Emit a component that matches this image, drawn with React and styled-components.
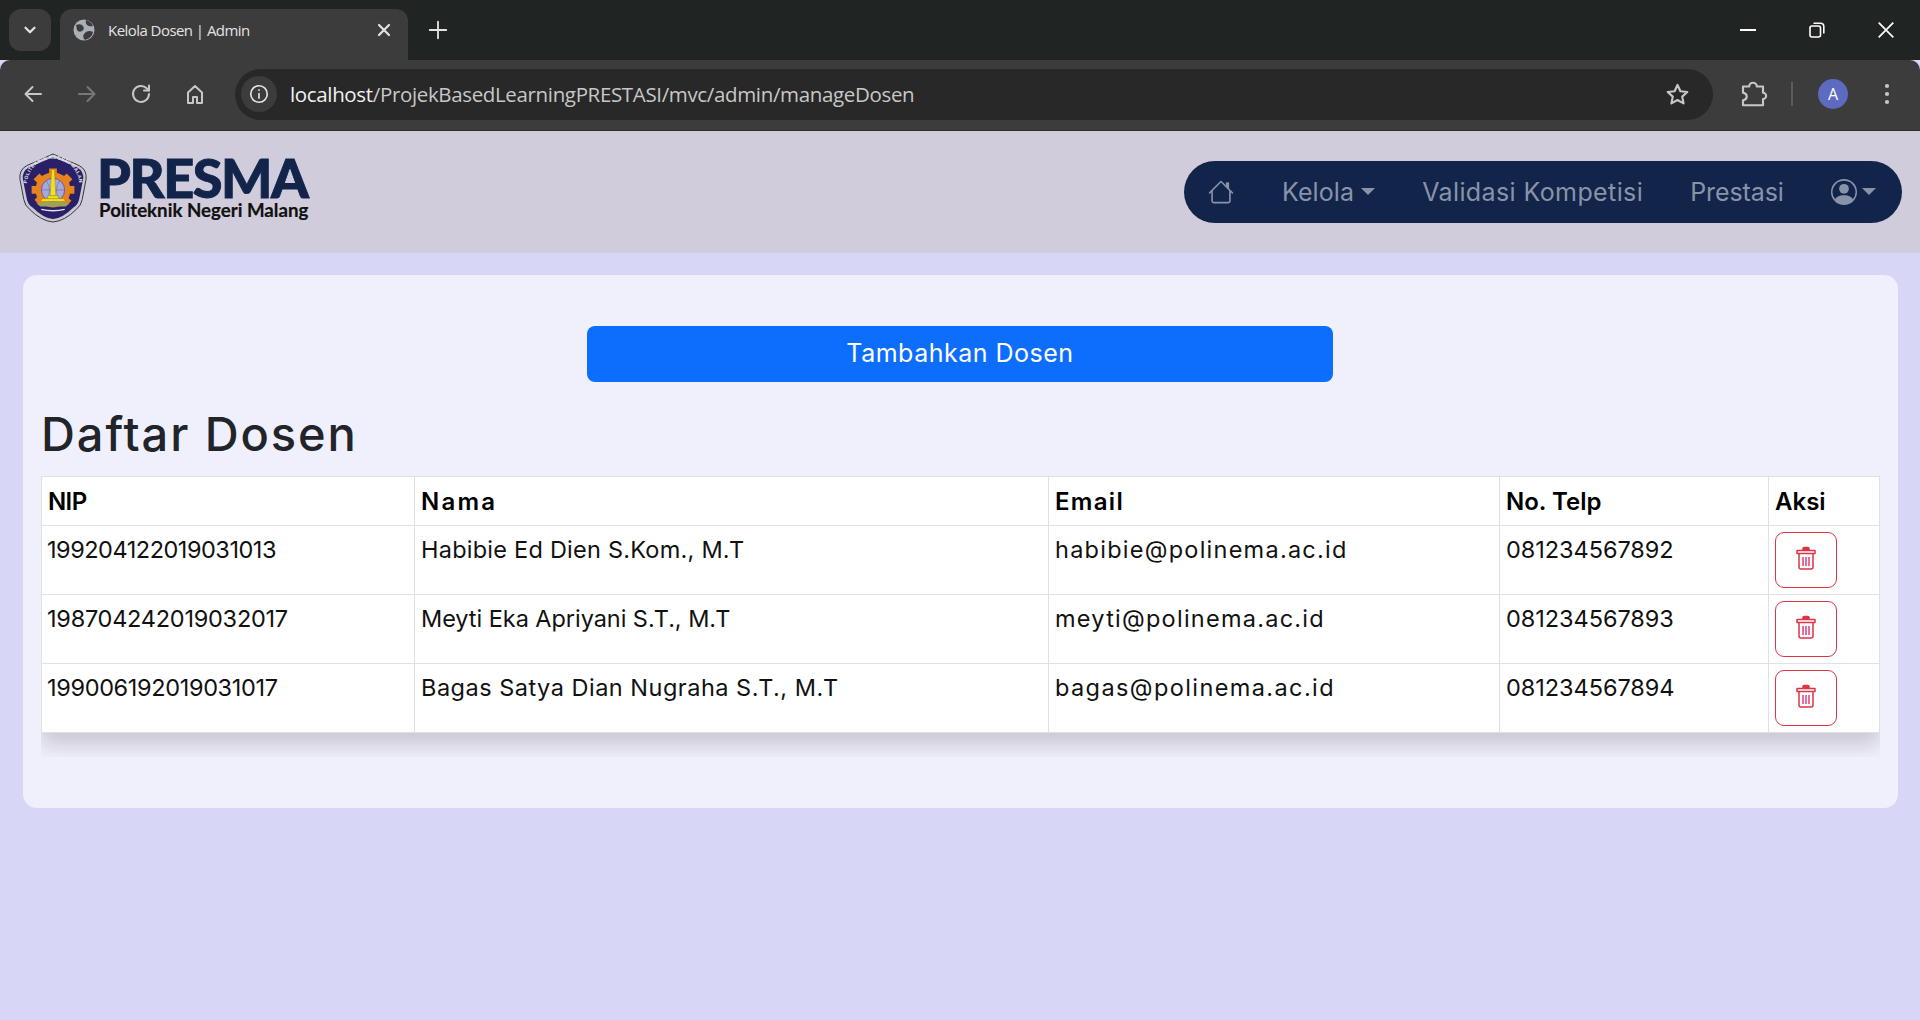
import React from "react";
import styled, { createGlobalStyle } from "styled-components";
import { BsHouse, BsPersonCircle } from "react-icons/bs";

const Global = createGlobalStyle`
  html, body { margin: 0; padding: 0; height: 100%; background: #d8d6f7; overflow: hidden; }
  #root { min-height: 100%; }
  * { box-sizing: border-box; }
`;

const Page = styled.div`
  width: 1920px; height: 1020px; display: flex; flex-direction: column; background: #d8d6f7;
  font-family: "Inter", "Liberation Sans", sans-serif;
`;
const TabStrip = styled.div`
  height: 60px; background: #202423; display: flex; align-items: flex-end; padding-left: 9px; flex: none;
`;
const TabSearch = styled.div`
  width: 42px; height: 42px; margin: 0 9px 9px 0; border-radius: 12px; background: #3c3c3c;
  display: flex; align-items: center; justify-content: center;
`;
const Tab = styled.div`
  width: 348px; height: 51px; background: #3c3c3c; border-radius: 12px 12px 0 0; display: flex; align-items: center;
  padding: 0 14px 9px 13px;
`;
const TabTitle = styled.span`
  flex: 1; margin-left: 13px; color: #e3e3e3; font: 400 15px "Open Sans", sans-serif; letter-spacing: -0.55px; white-space: nowrap;
`;
const NewTab = styled.div`
  width: 44px; height: 42px; margin: 0 0 9px 8px; display: flex; align-items: center; justify-content: center;
`;
const WindowControls = styled.div`
  margin-left: auto; display: flex; height: 60px; align-items: center;
`;
const WindowButton = styled.div`
  width: 69px; height: 60px; display: flex; align-items: center; justify-content: center;
`;
const Toolbar = styled.div`
  height: 71px; flex: none; background: #3c3c3c; display: flex; align-items: center; padding: 0 0 2px 6px;
  border-bottom: 1px solid #2c2c2c; border-radius: 10px 10px 0 0;
`;
const ToolButton = styled.div`
  width: 54px; height: 42px; display: flex; align-items: center; justify-content: center; flex: none;
`;
const Omnibox = styled.div`
  width: 1478px; height: 51px; margin-left: 13px; border-radius: 26px; background: #282828; display: flex; align-items: center; padding: 0 22px 0 6px; flex: none;
`;
const InfoChip = styled.div`
  width: 36px; height: 36px; border-radius: 50%; background: #3c3c3c; display: flex; align-items: center; justify-content: center; flex: none;
`;
const Url = styled.div`
  margin-left: 13px; flex: 1; font: 400 20.5px "Open Sans", sans-serif; letter-spacing: -0.35px; color: #c7c7c7; white-space: nowrap;
  b { font-weight: 400; color: #f1f1f1; }
`;
const ToolRight = styled.div`
  display: flex; align-items: center; flex: none; margin-left: 13px;
`;
const Divider = styled.div`
  width: 2px; height: 24px; background: #5c5c5c; margin: 0 25px 0 11px;
`;
const Avatar = styled.div`
  width: 30px; height: 30px; border-radius: 50%; background: #5c6bc0; color: #fff; font: 400 16px "Open Sans", sans-serif;
  display: flex; align-items: center; justify-content: center; margin-right: 27px;
`;
const NavBar = styled.nav`
  height: 122px; flex: none; background: #d0ccdb; display: flex; align-items: center; justify-content: space-between; padding: 0 18px 0 18px;
`;
const Brand = styled.div`
  display: flex; align-items: center; gap: 11px; margin-top: -9px;
`;
const BrandText = styled.div`
  display: flex; flex-direction: column;
`;
const BrandName = styled.div`
  font: 900 54px/46px "Lato", sans-serif; color: #12244a; letter-spacing: -1.4px; -webkit-text-stroke: 0.9px #12244a; white-space: nowrap; margin-left: -2px;
`;
const BrandSub = styled.div`
  font: 700 18.7px/19px "Lato", sans-serif; color: #111; white-space: nowrap; -webkit-text-stroke: 0.2px #111;
`;
const Pill = styled.div`
  width: 718px; height: 62px; background: #12244a; border-radius: 31px; display: flex; align-items: center; color: #8893a8;
  padding-left: 24px;
`;
const PillLink = styled.div`
  font: 400 25px "Inter", sans-serif; color: #8893a8; letter-spacing: ${p => p.$ls}px; margin-left: ${p => p.$ml}px; display: flex; align-items: center; white-space: nowrap;
`;
const Caret = styled.span`
  display: inline-block; width: 0; height: 0; margin-left: ${p => p.$ml}px; border-top: 7px solid currentColor; border-left: 7px solid transparent; border-right: 7px solid transparent; margin-top: -2px;
`;
const Main = styled.main`
  flex: 1; padding: 22px 22px 0 23px;
`;
const Card = styled.section`
  height: 533px; background: #f0effc; border-radius: 14px; padding: 51px 18px 0;
  display: flex; flex-direction: column;
`;
const AddButton = styled.button`
  width: 746px; height: 56px; margin-left: -1px; padding: 0 0 2px; align-self: center; background: #0d6efd; color: #fff; border: none; border-radius: 8px; flex: none;
  font: 400 25px "Inter", sans-serif; letter-spacing: 0.5px;
`;
const Heading = styled.h1`
  margin: 18px 0 2px 0; height: 74px; font: 500 47px/68px "Inter", sans-serif; color: #212529; letter-spacing: 1.9px;
`;
const TableWrap = styled.div`
  height: 281px; width: 1839px; overflow: hidden; flex: none;
`;
const Table = styled.table`
  width: 1838px; border-collapse: collapse; table-layout: fixed; background: #fff; box-shadow: 0 12px 20px rgba(0,0,0,.17);
`;
const Th = styled.th`
  border: 1px solid #dee2e6; height: 49px; padding: 0 6px; text-align: left; font: 600 24px "Inter", sans-serif; color: #000; letter-spacing: ${p => p.$ls}px;
`;
const Td = styled.td`
  border: 1px solid #dee2e6; height: 69px; padding: 10px 6px 0 ${p => p.$pl || 6}px; vertical-align: top; font: 400 23.5px/28px "Inter", sans-serif; color: #111;
  letter-spacing: ${p => p.$ls}px; white-space: nowrap;
`;
const ActionCell = styled.td`
  border: 1px solid #dee2e6; height: 69px; padding: 6px 6px 0; vertical-align: top;
`;
const DeleteButton = styled.div`
  width: 62px; height: 56px; border: 1.5px solid #dc3545; border-radius: 9px; display: flex; align-items: center; justify-content: center; padding-bottom: 4px;
`;
const LogoSvg = styled.svg`
  width: 70px; height: 70px; overflow: visible; flex: none;
`;

const Stroke = ({ c = "#c7c7c7", w = 2, size = 24, children }) => (
  <svg width={size} height={size} viewBox="0 0 24 24" fill="none" stroke={c} strokeWidth={w} strokeLinecap="round" strokeLinejoin="round">{children}</svg>
);

const Trash = () => (
  <svg width="20" height="24" viewBox="0 0 20 24" fill="none" stroke="#dc3545" strokeWidth="1.5">
    <path d="M1 4.5h18v3H1z" strokeLinejoin="round" />
    <path d="M7 4V2.6Q7 1.5 8.2 1.5h3.6Q13 1.5 13 2.6V4" fill="#dc3545" />
    <path d="M3 8v13q0 2 2 2h10q2 0 2-2V8" />
    <path d="M7 11v9M10 11v9M13 11v9" stroke="#e0407a" />
  </svg>
);

const Logo = () => (
  <LogoSvg viewBox="0 0 72 72">
    <defs>
      <path id="logoArc" d="M9 33A27 27 0 0 1 63 33" />
    </defs>
    <path d="M36 1 L63 13 Q71 17 70 27 L66 48 Q65 54 60 58 Q48 70 36 71 Q24 70 12 58 Q7 54 6 48 L2 27 Q1 17 9 13 Z" fill="#c9c9d6" stroke="#333" strokeWidth="1" />
    <path d="M36 4 L61 15 Q68 19 67 27 L63 47 Q62 53 57 56 Q46 67 36 68 Q26 67 15 56 Q10 53 9 47 L5 27 Q4 19 11 15 Z" fill="#2a2068" />
    <text fontSize="5" fill="#e8e8f0" fontFamily="Liberation Sans" fontWeight="700" letterSpacing=".45"><textPath href="#logoArc" startOffset="2%">POLITEKNIK NEGERI MALANG</textPath></text>
    <g fill="#e8821e">
      <circle cx="36" cy="38" r="18" />
      <path d="M32 16h8v6h-8zM50 21l6 6-5 5-6-6zM58 34v8h-6v-8zM50 54l-6-5 5-5 6 5zM22 54l-5-6 5-5 6 5zM14 42v-8h6v8zM16 27l6-6 5 5-6 6z" />
    </g>
    <circle cx="36" cy="38" r="12" fill="#a8a9d8" stroke="#5a5ca8" strokeWidth="1" />
    <path d="M24 38h24M36 26v24M29 28q7 10 0 20M43 28q-7 10 0 20" stroke="#6a6cb8" strokeWidth=".7" fill="none" />
    <path d="M34.6 17h2.8l1.4 27h-5.6z" fill="#f2e21a" stroke="#8a7a10" strokeWidth=".4" />
    <path d="M31 44h10l1 3H30z" fill="#f2e21a" stroke="#8a7a10" strokeWidth=".4" />
    <path d="M25 47h22l2 3H23z" fill="#f2e21a" stroke="#8a7a10" strokeWidth=".4" />
    <path d="M19 52q17-3 34 0l-4 3H23z" fill="#9aa35a" />
    <path d="M24 58q12 3 24 0" stroke="#e8e8f0" strokeWidth="1.5" fill="none" />
  </LogoSvg>
);

const headers = [["NIP", -0.6], ["Nama", 2.2], ["Email", 1.3], ["No. Telp", 0], ["Aksi", 0]];

const rows = [
  { nip: "199204122019031013", nipLs: -0.48, nama: "Habibie Ed Dien S.Kom., M.T", namaLs: 0.24, email: "habibie@polinema.ac.id", emailLs: 1.25, telp: "081234567892" },
  { nip: "198704242019032017", nipLs: -0.25, nama: "Meyti Eka Apriyani S.T., M.T", namaLs: -0.05, email: "meyti@polinema.ac.id", emailLs: 1.25, telp: "081234567893" },
  { nip: "199006192019031017", nipLs: -0.35, nama: "Bagas Satya Dian Nugraha S.T., M.T", namaLs: 0.5, email: "bagas@polinema.ac.id", emailLs: 1.4, telp: "081234567894" },
];

export default function App() {
  return (
    <Page>
      <Global />
      <TabStrip>
        <TabSearch>
          <Stroke size={18} c="#e3e3e3" w={3}><path d="M6 9l6 6 6-6" /></Stroke>
        </TabSearch>
        <Tab>
          <svg width="22" height="22" viewBox="0 0 22 22">
            <circle cx="11" cy="11" r="10.5" fill="#a9b0b6" />
            <path d="M3 6q5-2 7 1t-1 5-5-1zM12 21q-3-3-1-6t5-3 4 1q-1 6-8 8zM13 1q5 1 7 6-4 1-6-1t-1-5z" fill="#3c3c3c" />
          </svg>
          <TabTitle>Kelola Dosen | Admin</TabTitle>
          <Stroke size={20} c="#e3e3e3" w={2.6}><path d="M6 6l12 12M18 6L6 18" /></Stroke>
        </Tab>
        <NewTab>
          <Stroke size={22} c="#e3e3e3" w={2}><path d="M12 3v18M3 12h18" /></Stroke>
        </NewTab>
        <WindowControls>
          <WindowButton><svg width="16" height="2"><rect width="16" height="2" fill="#fff" /></svg></WindowButton>
          <WindowButton>
            <svg width="16" height="16" viewBox="0 0 16 16" fill="none" stroke="#fff" strokeWidth="1.6">
              <rect x="1" y="4" width="10.5" height="11" rx="2" />
              <path d="M4.5 1.2h7q3.3 0 3.3 3.3v7" />
            </svg>
          </WindowButton>
          <WindowButton>
            <svg width="16" height="16" viewBox="0 0 16 16" stroke="#fff" strokeWidth="1.7"><path d="M.7.7l14.6 14.6M15.3.7L.7 15.3" /></svg>
          </WindowButton>
        </WindowControls>
      </TabStrip>
      <Toolbar>
        <ToolButton>
          <Stroke c="#c7c7c7"><path d="M20 12H5M11.5 5L4.5 12l7 7" /></Stroke>
        </ToolButton>
        <ToolButton>
          <Stroke c="#777"><path d="M4 12h15M12.5 5l7 7-7 7" /></Stroke>
        </ToolButton>
        <ToolButton>
          <Stroke c="#c7c7c7"><path d="M20 12a8 8 0 1 1-2.3-5.7L20 8.5" /><path d="M20 3.5v5h-5" /></Stroke>
        </ToolButton>
        <ToolButton>
          <Stroke c="#c7c7c7"><path d="M5 21V10.5L12 4l7 6.5V21h-5v-6h-4v6z" /></Stroke>
        </ToolButton>
        <Omnibox>
          <InfoChip>
            <Stroke size={22} c="#e3e3e3" w={1.8}><circle cx="12" cy="12" r="9" /><path d="M12 11.5v5M12 7.5v.5" /></Stroke>
          </InfoChip>
          <Url><b>localhost</b>/ProjekBasedLearningPRESTASI/mvc/admin/manageDosen</Url>
          <Stroke size={27} c="#c7c7c7" w={1.9}><path d="M12 3.5l2.6 5.6 6.1.7-4.5 4.1 1.2 6-5.4-3-5.4 3 1.2-6-4.5-4.1 6.1-.7z" /></Stroke>
        </Omnibox>
        <ToolRight>
          <ToolButton>
            <Stroke size={30} c="#c7c7c7" w={1.7}><path d="M4 6h5a3 3 0 0 1 6 0h5v5a2.5 2.5 0 0 1 0 5v5H4v-4q3-.5 3-3t-3-3z" /></Stroke>
          </ToolButton>
          <Divider />
          <Avatar>A</Avatar>
          <Stroke size={24} c="#c7c7c7" w={0}>
            <circle cx="12" cy="4" r="2.1" fill="#c7c7c7" /><circle cx="12" cy="12" r="2.1" fill="#c7c7c7" /><circle cx="12" cy="20" r="2.1" fill="#c7c7c7" />
          </Stroke>
        </ToolRight>
      </Toolbar>
      <NavBar>
        <Brand>
          <Logo />
          <BrandText>
            <BrandName>PRESMA</BrandName>
            <BrandSub>Politeknik Negeri Malang</BrandSub>
          </BrandText>
        </Brand>
        <Pill>
          <BsHouse size={26} />
          <PillLink $ml={48} $ls={0.1}>Kelola<Caret $ml={7} /></PillLink>
          <PillLink $ml={47} $ls={0.4}>Validasi Kompetisi</PillLink>
          <PillLink $ml={47} $ls={-0.1}>Prestasi</PillLink>
          <PillLink $ml={47} $ls={0}><BsPersonCircle size={26} /><Caret $ml={5} /></PillLink>
        </Pill>
      </NavBar>
      <Main>
        <Card>
          <AddButton>Tambahkan Dosen</AddButton>
          <Heading>Daftar Dosen</Heading>
          <TableWrap>
            <Table>
              <colgroup>
                <col style={{ width: 373 }} /><col style={{ width: 634 }} /><col style={{ width: 451 }} /><col style={{ width: 269 }} /><col style={{ width: 111 }} />
              </colgroup>
              <thead>
                <tr>{headers.map(([label, ls]) => <Th key={label} $ls={ls}>{label}</Th>)}</tr>
              </thead>
              <tbody>
                {rows.map(r => (
                  <tr key={r.nip}>
                    <Td $pl={5} $ls={r.nipLs}>{r.nip}</Td>
                    <Td $ls={r.namaLs}>{r.nama}</Td>
                    <Td $ls={r.emailLs}>{r.email}</Td>
                    <Td $ls={-0.05}>{r.telp}</Td>
                    <ActionCell><DeleteButton><Trash /></DeleteButton></ActionCell>
                  </tr>
                ))}
              </tbody>
            </Table>
          </TableWrap>
        </Card>
      </Main>
    </Page>
  );
}
